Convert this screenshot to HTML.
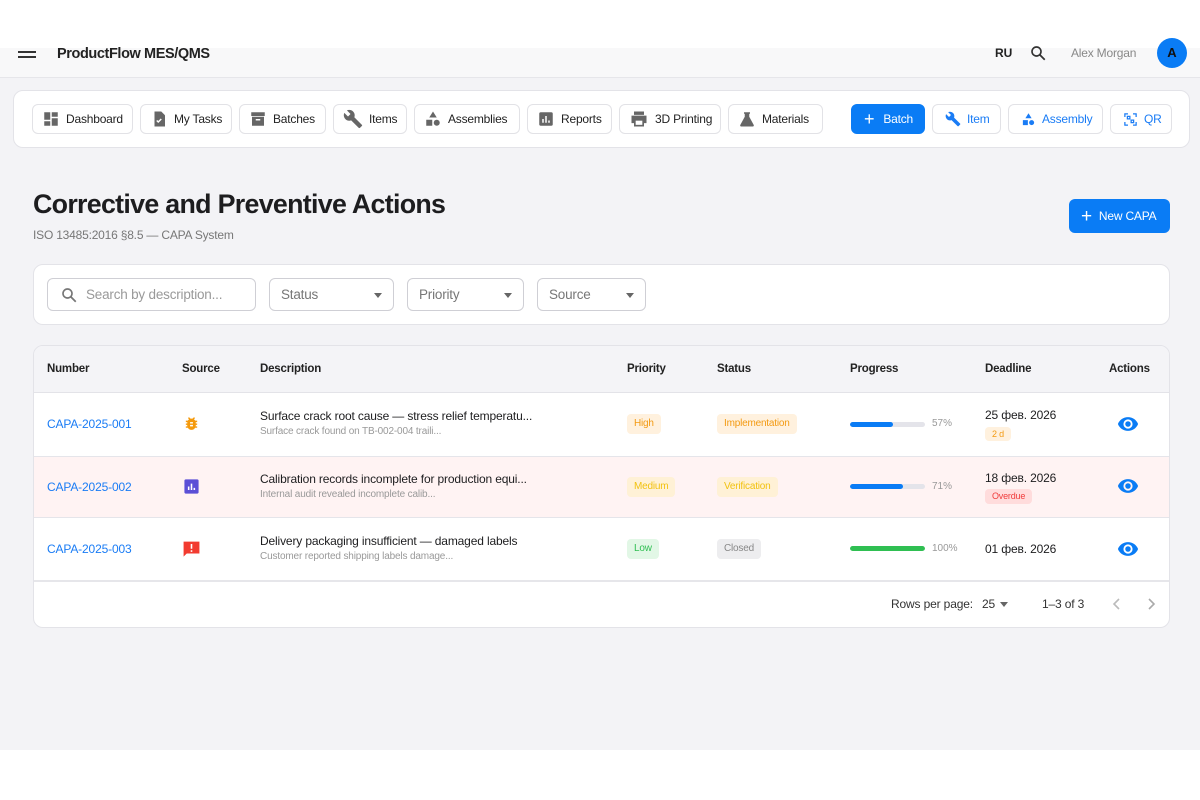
<!DOCTYPE html>
<html><head><meta charset="utf-8"><style>
*{box-sizing:border-box;margin:0;padding:0}
body{width:1200px;height:800px;background:#fff;font-family:"Liberation Sans",sans-serif;position:relative;overflow:hidden;color:#1d1d1f;white-space:nowrap}
.a{position:absolute}
.hdr{left:0;top:48px;width:1200px;height:30px;background:#f8f8f9;border-bottom:1px solid #e6e6ea}
.main{left:0;top:78px;width:1200px;height:672px;background:#f3f3f6}
.card{background:#fff;border:1px solid #e3e3e8;border-radius:10px}
.nb{position:absolute;top:104px;height:30px;border:1px solid #e2e2e6;border-radius:6px;background:#fff;font-size:12px;letter-spacing:-0.2px;display:flex;align-items:center;gap:6px;padding-left:9px;color:#222;white-space:nowrap}
.nb.b{color:#1a7cf5}
.nb.p{background:#0a7cf5;border-color:#0a7cf5;color:#fff}
.sel{position:absolute;top:278px;height:33px;border:1px solid #cfcfd5;border-radius:6px;font-size:13.5px;letter-spacing:-0.2px;color:#777;display:flex;align-items:center;padding-left:11px}
.sel .ar{position:absolute;right:11px;top:14px;border:4.5px solid transparent;border-top:5px solid #666;border-bottom:0}
.th{position:absolute;top:363px;font-size:11.5px;font-weight:bold;color:#222;letter-spacing:-0.2px}
.row{position:absolute;left:34px;width:1135px;border-top:1px solid #e5e5ea}
.t{position:absolute;font-size:12px;letter-spacing:-0.15px}
.num{color:#1a7cf5}
.chip{position:absolute;height:20px;border-radius:4px;font-size:10px;padding:0 7px;line-height:20px;letter-spacing:-0.2px}
.bar{position:absolute;left:850px;width:75px;height:5px;border-radius:3px;background:#e4e4ea;overflow:hidden}
.bar i{display:block;height:5px;border-radius:3px;background:#0a7cf5}
.pc{position:absolute;left:932px;font-size:10px;color:#999}
.sm{font-size:10px;color:#999}
</style></head><body>
<div class="a hdr"></div>
<div class="a" style="left:18px;top:51px;width:18px;height:2px;background:#333"></div>
<div class="a" style="left:18px;top:56px;width:18px;height:2px;background:#333"></div>
<div class="a" style="left:57px;top:46px;font-size:14.5px;font-weight:bold;color:#222;letter-spacing:-0.4px">ProductFlow MES/QMS</div>
<div class="a" style="left:995px;top:46px;font-size:12px;font-weight:bold;color:#222">RU</div>
<svg class="a" style="left:1029px;top:44px" width="18" height="18" viewBox="0 0 24 24"><circle cx="10" cy="10" r="6" fill="none" stroke="#333" stroke-width="2.2"/><path d="M14.5 14.5L21 21" stroke="#333" stroke-width="2.4"/></svg>
<div class="a" style="left:1071px;top:46px;font-size:12px;color:#888;letter-spacing:-0.2px">Alex Morgan</div>
<div class="a" style="left:1157px;top:38px;width:30px;height:30px;border-radius:50%;background:#0a7cf5;color:#111;font-size:13px;font-weight:bold;text-align:center;line-height:30px">A</div>
<div class="a main"></div>
<div class="a card" style="left:13px;top:90px;width:1177px;height:58px"></div>
<div class="nb" style="left:32px;width:101px"><svg width="18" height="18" viewBox="0 0 24 24" fill="#666"><path d="M3 3h8v10H3zM13 3h8v6h-8zM13 11h8v10h-8zM3 15h8v6H3z"/></svg>Dashboard</div>
<div class="nb" style="left:140px;width:92px"><svg width="18" height="18" viewBox="0 0 24 24" fill="#666"><path d="M6 2h9l5 5v15H6z"/><path d="M9 14l2 2 4-4" stroke="#fff" stroke-width="2" fill="none"/></svg>My Tasks</div>
<div class="nb" style="left:239px;width:87px"><svg width="18" height="18" viewBox="0 0 24 24" fill="#666"><path d="M3 3h18v5H3zM4 9h16v12H4z"/><path d="M9 13h6" stroke="#fff" stroke-width="2"/></svg>Batches</div>
<div class="nb" style="left:333px;width:74px"><svg width="20" height="20" viewBox="0 0 24 24" fill="#666"><path d="M22.7 19l-9.1-9.1c.9-2.3.4-5-1.5-6.9-2-2-5-2.4-7.4-1.3L9 6 6 9 1.6 4.7C.4 7.1.9 10.1 2.9 12.1c1.9 1.9 4.6 2.4 6.9 1.5l9.1 9.1c.4.4 1 .4 1.4 0l2.3-2.3c.5-.4.5-1.1.1-1.4z"/></svg>Items</div>
<div class="nb" style="left:414px;width:106px"><svg width="18" height="18" viewBox="0 0 24 24" fill="#666"><path d="M12 2l5 8H7z"/><rect x="3" y="13" width="8" height="8"/><circle cx="17" cy="17" r="4"/></svg>Assemblies</div>
<div class="nb" style="left:527px;width:85px"><svg width="18" height="18" viewBox="0 0 24 24"><rect x="3" y="3" width="18" height="18" rx="2" fill="#666"/><path d="M8 17v-5M12 17V8M16 17v-3" stroke="#fff" stroke-width="2"/></svg>Reports</div>
<div class="nb" style="left:619px;width:102px"><svg width="20" height="20" viewBox="0 0 24 24" fill="#666"><path d="M6 3h12v4H6zM3 8h18v9h-3v4H6v-4H3z"/><rect x="8" y="14" width="8" height="5" fill="#fff"/></svg>3D Printing</div>
<div class="nb" style="left:728px;width:95px"><svg width="18" height="18" viewBox="0 0 24 24" fill="#666"><path d="M8 3h8v2h-1v4l6 11c.4.9-.2 2-1.2 2H4.2c-1 0-1.6-1.1-1.2-2L9 9V5H8z"/></svg>Materials</div>
<div class="nb p" style="left:851px;width:74px;padding-left:12px;gap:9px"><span style="font-size:18px;line-height:1">+</span>Batch</div>
<div class="nb b" style="left:932px;width:69px;padding-left:12px"><svg width="16" height="16" viewBox="0 0 24 24" fill="#1a7cf5"><path d="M22.7 19l-9.1-9.1c.9-2.3.4-5-1.5-6.9-2-2-5-2.4-7.4-1.3L9 6 6 9 1.6 4.7C.4 7.1.9 10.1 2.9 12.1c1.9 1.9 4.6 2.4 6.9 1.5l9.1 9.1c.4.4 1 .4 1.4 0l2.3-2.3c.5-.4.5-1.1.1-1.4z"/></svg>Item</div>
<div class="nb b" style="left:1008px;width:95px;padding-left:12px"><svg width="15" height="15" viewBox="0 0 24 24" fill="#1a7cf5"><path d="M12 2l5 8H7z"/><rect x="3" y="13" width="8" height="8"/><circle cx="17" cy="17" r="4"/></svg>Assembly</div>
<div class="nb b" style="left:1110px;width:62px;padding-left:12px"><svg width="15" height="15" viewBox="0 0 24 24" fill="none" stroke="#1a7cf5" stroke-width="2"><path d="M3 8V3h5M16 3h5v5M21 16v5h-5M8 21H3v-5"/><rect x="7" y="7" width="4" height="4"/><rect x="13" y="13" width="4" height="4"/></svg>QR</div>

<div class="a" style="left:33px;top:189px;font-size:26.8px;font-weight:bold;letter-spacing:-0.7px;color:#1d1d1f">Corrective and Preventive Actions</div>
<div class="a" style="left:33px;top:228px;font-size:12px;color:#777;letter-spacing:-0.2px">ISO 13485:2016 §8.5 — CAPA System</div>
<div class="a" style="left:1069px;top:199px;width:101px;height:34px;background:#0a7cf5;border-radius:6px;color:#fff;font-size:12px;line-height:34px;padding-left:12px;letter-spacing:-0.2px"><span style="font-size:19px;vertical-align:-2px;margin-right:7px">+</span>New CAPA</div>

<div class="a card" style="left:33px;top:264px;width:1137px;height:61px"></div>
<div class="sel" style="left:47px;width:209px;color:#999;padding-left:38px"><svg class="a" style="left:12px;top:7px" width="18" height="18" viewBox="0 0 24 24"><circle cx="10" cy="10" r="6" fill="none" stroke="#777" stroke-width="2.2"/><path d="M14.5 14.5L21 21" stroke="#777" stroke-width="2.4"/></svg>Search by description...</div>
<div class="sel" style="left:269px;width:125px">Status<span class="ar"></span></div>
<div class="sel" style="left:407px;width:117px">Priority<span class="ar"></span></div>
<div class="sel" style="left:537px;width:109px">Source<span class="ar"></span></div>

<div class="a card" style="left:33px;top:345px;width:1137px;height:283px;overflow:hidden"><div style="height:47px;background:#f4f4f7;border-bottom:1px solid #e3e3e8"></div></div>
<div class="th" style="left:47px">Number</div><div class="th" style="left:182px">Source</div><div class="th" style="left:260px">Description</div><div class="th" style="left:627px">Priority</div><div class="th" style="left:717px">Status</div><div class="th" style="left:850px">Progress</div><div class="th" style="left:985px">Deadline</div><div class="th" style="left:1109px">Actions</div>

<div class="row" style="top:456px;height:62px;background:#fff3f3;border-bottom:1px solid #e5e5ea"></div>
<div class="row" style="top:580px;height:0;border-top:2px solid #e6e6ea"></div>

<div class="t num" style="left:47px;top:417px">CAPA-2025-001</div>
<svg class="a" style="left:183px;top:415px" width="17" height="17" viewBox="0 0 24 24" fill="#f59a0c"><path d="M20 8h-2.8a6 6 0 0 0-1.8-2l1.6-1.6L15.6 3l-2.2 2.2a6 6 0 0 0-2.8 0L8.4 3 7 4.4 8.6 6a6 6 0 0 0-1.8 2H4v2h2.1c-.1.3-.1.7-.1 1v1H4v2h2v1c0 .3 0 .7.1 1H4v2h2.8a6 6 0 0 0 10.4 0H20v-2h-2.1c.1-.3.1-.7.1-1v-1h2v-2h-2v-1c0-.3 0-.7-.1-1H20zm-6 8h-4v-2h4zm0-4h-4v-2h4z"/></svg>
<div class="t" style="left:260px;top:409px">Surface crack root cause — stress relief temperatu...</div>
<div class="t sm" style="left:260px;top:426px">Surface crack found on TB-002-004 traili...</div>
<div class="chip" style="left:627px;top:414px;background:#fff1de;color:#f39a12">High</div>
<div class="chip" style="left:717px;top:414px;background:#fff1de;color:#f39a12">Implementation</div>
<div class="bar" style="top:422px"><i style="width:57%"></i></div><div class="pc" style="top:418px">57%</div>
<div class="t" style="left:985px;top:408px">25 фев. 2026</div>
<div class="chip" style="left:985px;top:427px;height:14px;line-height:14px;font-size:9px;background:#fff1de;color:#f39a12">2 d</div>

<div class="t num" style="left:47px;top:480px">CAPA-2025-002</div>
<svg class="a" style="left:183px;top:478px" width="17" height="17" viewBox="0 0 24 24"><rect x="2" y="2" width="20" height="20" rx="2" fill="#5b4fd6"/><path d="M8 17v-5M12 17V8M16 17v-3" stroke="#fff" stroke-width="2.2"/></svg>
<div class="t" style="left:260px;top:472px">Calibration records incomplete for production equi...</div>
<div class="t sm" style="left:260px;top:489px">Internal audit revealed incomplete calib...</div>
<div class="chip" style="left:627px;top:477px;background:#fff1d6;color:#f2c20f">Medium</div>
<div class="chip" style="left:717px;top:477px;background:#fff1d6;color:#f2c20f">Verification</div>
<div class="bar" style="top:484px"><i style="width:71%"></i></div><div class="pc" style="top:481px">71%</div>
<div class="t" style="left:985px;top:471px">18 фев. 2026</div>
<div class="chip" style="left:985px;top:489px;height:15px;line-height:15px;font-size:9px;background:#ffdcdc;color:#f03c3c">Overdue</div>

<div class="t num" style="left:47px;top:542px">CAPA-2025-003</div>
<svg class="a" style="left:182px;top:540px" width="19" height="19" viewBox="0 0 24 24" fill="#f23b30"><path d="M2 2h20v15H6l-4 4z"/><path d="M12 5v6M12 13v2" stroke="#fff" stroke-width="2"/></svg>
<div class="t" style="left:260px;top:534px">Delivery packaging insufficient — damaged labels</div>
<div class="t sm" style="left:260px;top:551px">Customer reported shipping labels damage...</div>
<div class="chip" style="left:627px;top:539px;background:#e2f7e6;color:#2fbf52">Low</div>
<div class="chip" style="left:717px;top:539px;background:#ededef;color:#888">Closed</div>
<div class="bar" style="top:546px"><i style="width:100%;background:#2fbf52"></i></div><div class="pc" style="top:543px">100%</div>
<div class="t" style="left:985px;top:542px">01 фев. 2026</div>

<svg class="a" style="left:1117px;top:413px" width="22" height="22" viewBox="0 0 24 24"><path fill="#0a7cf5" d="M12 4.5C7 4.5 2.7 7.6 1 12c1.7 4.4 6 7.5 11 7.5s9.3-3.1 11-7.5c-1.7-4.4-6-7.5-11-7.5zM12 17a5 5 0 1 1 0-10 5 5 0 0 1 0 10zm0-8a3 3 0 1 0 0 6 3 3 0 0 0 0-6z"/></svg>
<svg class="a" style="left:1117px;top:475px" width="22" height="22" viewBox="0 0 24 24"><path fill="#0a7cf5" d="M12 4.5C7 4.5 2.7 7.6 1 12c1.7 4.4 6 7.5 11 7.5s9.3-3.1 11-7.5c-1.7-4.4-6-7.5-11-7.5zM12 17a5 5 0 1 1 0-10 5 5 0 0 1 0 10zm0-8a3 3 0 1 0 0 6 3 3 0 0 0 0-6z"/></svg>
<svg class="a" style="left:1117px;top:538px" width="22" height="22" viewBox="0 0 24 24"><path fill="#0a7cf5" d="M12 4.5C7 4.5 2.7 7.6 1 12c1.7 4.4 6 7.5 11 7.5s9.3-3.1 11-7.5c-1.7-4.4-6-7.5-11-7.5zM12 17a5 5 0 1 1 0-10 5 5 0 0 1 0 10zm0-8a3 3 0 1 0 0 6 3 3 0 0 0 0-6z"/></svg>

<div class="t" style="left:891px;top:597px;color:#333">Rows per page:</div>
<div class="t" style="left:982px;top:597px;color:#333">25</div>
<div class="a" style="left:1000px;top:602px;border:4px solid transparent;border-top:5px solid #666;border-bottom:0"></div>
<div class="t" style="left:1042px;top:597px;color:#333">1–3 of 3</div>
<svg class="a" style="left:1111px;top:597px" width="12" height="14" viewBox="0 0 12 14"><path d="M8 2L3 7l5 5" stroke="#bbb" stroke-width="1.6" fill="none"/></svg>
<svg class="a" style="left:1145px;top:597px" width="12" height="14" viewBox="0 0 12 14"><path d="M4 2l5 5-5 5" stroke="#aaa" stroke-width="1.6" fill="none"/></svg>
</body></html>
